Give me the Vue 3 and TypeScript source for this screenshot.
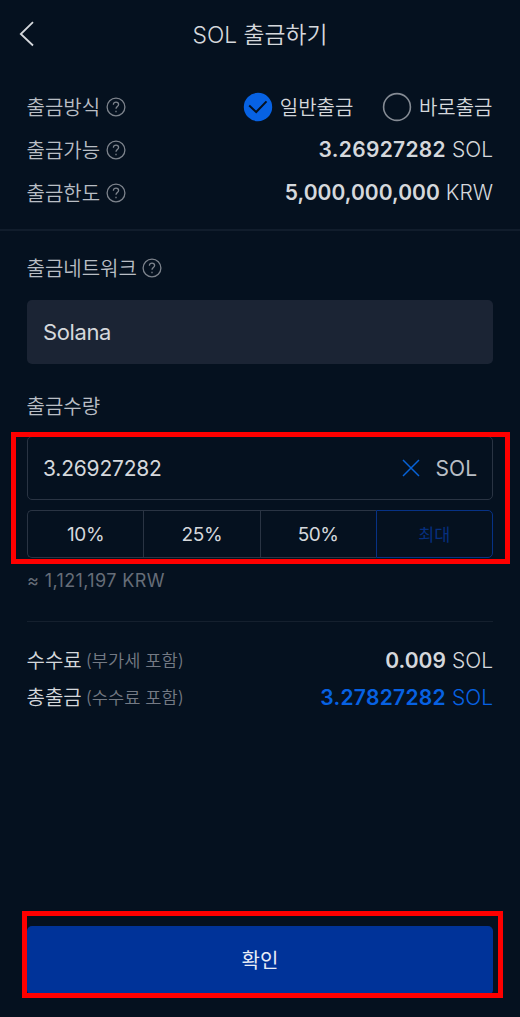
<script setup lang="ts">
interface Row {
  label: string
  value?: string
  unit?: string
}

const rows: Row[] = [
  { label: '출금방식' },
  { label: '출금가능', value: '3.26927282', unit: 'SOL' },
  { label: '출금한도', value: '5,000,000,000', unit: 'KRW' },
]
const methods = [
  { name: '일반출금', selected: true },
  { name: '바로출금', selected: false },
]
const ratios = ['10%', '25%', '50%', '최대']
const totals = [
  { label: '수수료', note: '(부가세 포함)', value: '0.009', accent: false },
  { label: '총출금', note: '(수수료 포함)', value: '3.27827282', accent: true },
]
</script>

<template>
  <main class="screen">
    <header class="header">
      <svg class="back" width="16" height="28" viewBox="0 0 16 28"><path d="M14 2.2 1.8 14 14 25.5" /></svg>
      <h1 class="title">SOL 출금하기</h1>
    </header>

    <section class="info">
      <div v-for="row in rows" :key="row.label" class="row">
        <span class="label">{{ row.label }}</span>
        <svg class="help" width="20" height="20" viewBox="0 0 20 20">
          <circle cx="10" cy="10" r="8.9" />
          <path d="M7.4 7.7c0-1.6 1.1-2.6 2.6-2.6s2.6 1 2.6 2.4c0 2-2.6 2.1-2.6 4.3" />
          <path d="M10 13.7v1.5" />
        </svg>
        <div v-if="row.value" class="amount" :class="{ limit: row.unit === 'KRW' }">
          <b>{{ row.value }}</b><span class="unit">{{ row.unit }}</span>
        </div>
        <div v-else class="methods">
          <div v-for="m in methods" :key="m.name" class="method">
            <svg width="30" height="30" viewBox="0 0 30 30">
              <template v-if="m.selected">
                <circle class="disc" cx="15" cy="15" r="14.2" />
                <path class="tick" d="m6.2 13.6 7 6.4L23.5 9.4" />
              </template>
              <circle v-else class="ring" cx="15" cy="15" r="13.4" />
            </svg>
            <span class="method-name">{{ m.name }}</span>
          </div>
        </div>
      </div>
    </section>

    <section class="form">
      <div class="field-label network">
        <span class="label">출금네트워크</span>
        <svg class="help" width="20" height="20" viewBox="0 0 20 20">
          <circle cx="10" cy="10" r="8.9" />
          <path d="M7.4 7.7c0-1.6 1.1-2.6 2.6-2.6s2.6 1 2.6 2.4c0 2-2.6 2.1-2.6 4.3" />
          <path d="M10 13.7v1.5" />
        </svg>
      </div>
      <div class="select">Solana</div>
      <div class="field-label quantity"><span class="label">출금수량</span></div>
      <div class="entry">
        <div class="input">
          <span class="number">3.26927282</span>
          <svg class="clear" width="18" height="18" viewBox="0 0 18 18"><path d="m1 1 16 16M17 1 1 17" /></svg>
          <span class="input-unit">SOL</span>
        </div>
        <div class="ratios">
          <button v-for="(r, i) in ratios" :key="r" class="ratio" :class="{ max: i === 3 }">{{ r }}</button>
        </div>
        <div class="outline entry-outline"></div>
      </div>
      <div class="approx">≈ 1,121,197 KRW</div>
      <div class="totals">
        <div v-for="t in totals" :key="t.label" class="total">
          <span class="label bright">{{ t.label }}</span>
          <span class="note">{{ t.note }}</span>
          <div class="amount" :class="{ accent: t.accent, fee: !t.accent }">
            <b>{{ t.value }}</b><span class="unit">SOL</span>
          </div>
        </div>
      </div>
    </section>

    <footer class="footer">
      <button class="confirm">확인</button>
      <div class="outline footer-outline"></div>
    </footer>
  </main>
</template>

<style>
body {
  background: #05111f;
}
</style>

<style scoped>
.screen {
  box-sizing: border-box;
  width: 520px;
  height: 1017px;
  display: flex;
  flex-direction: column;
  overflow: hidden;
  background: #05111f;
  color: #d5d8dc;
  font-family: Inter, "Noto Sans CJK KR", sans-serif;
  font-size: 20px;
  line-height: 30px;
  white-space: nowrap;
}
svg {
  display: block;
  flex: none;
  fill: none;
}
button {
  padding: 0;
  margin: 0;
  background: none;
  font: inherit;
  color: inherit;
}
.header {
  height: 85px;
  box-sizing: border-box;
  position: relative;
  padding-top: 20px;
}
.back {
  position: absolute;
  left: 19px;
  top: 20px;
  stroke: #d5d8dc;
  stroke-width: 1.8;
}
.title {
  margin: 0;
  text-align: center;
  font-size: 22.8px;
  font-weight: 360;
  line-height: 30px;
}
.info {
  height: 144px;
  padding: 0 27px;
  border-bottom: 2px solid #111d2c;
}
.row {
  height: 43px;
  display: flex;
  align-items: center;
}
.label {
  padding-top: 2px;
  margin-left: -0.5px;
  color: #b9bec5;
  font-weight: 350;
}
.bright {
  color: #d5d8dc;
}
.help {
  margin-left: 5.5px;
  stroke: #7d838c;
  stroke-width: 1.3;
}
.amount {
  margin-left: auto;
  padding-top: 1px;
  display: flex;
  gap: 6px;
  font-size: 21px;
}
.amount b {
  font-weight: 600;
  letter-spacing: 0.3px;
}
.amount.limit b {
  letter-spacing: 0.03px;
}
.amount.fee b {
  letter-spacing: 0.05px;
}
.unit {
  font-weight: 300;
}
.methods {
  margin-left: auto;
  margin-right: 0.5px;
  display: flex;
  gap: 29px;
}
.method {
  display: flex;
  align-items: center;
  gap: 6.5px;
  font-weight: 350;
}
.method-name {
  padding-top: 2px;
}
.disc {
  fill: #0762e3;
}
.tick {
  stroke: #05111f;
  stroke-width: 2;
}
.ring {
  stroke: #858b94;
  stroke-width: 1.6;
}
.form {
  padding: 0 27px;
}
.field-label {
  height: 30px;
  display: flex;
  align-items: center;
}
.network {
  margin-top: 22px;
}
.select {
  height: 64px;
  margin-top: 17px;
  padding-left: 16px;
  border-radius: 5px;
  background: #1b2434;
  font-size: 22px;
  letter-spacing: -0.4px;
  line-height: 65px;
}
.quantity {
  margin-top: 27px;
}
.entry {
  position: relative;
  margin-top: 15px;
}
.input {
  box-sizing: border-box;
  height: 64px;
  display: flex;
  align-items: center;
  padding: 0 15px;
  border: 1px solid #2a3443;
  border-radius: 5px;
  font-size: 21px;
}
.number {
  padding-top: 1px;
  letter-spacing: -0.2px;
}
.clear {
  margin-left: auto;
  stroke: #0762d8;
  stroke-width: 1.5;
}
.input-unit {
  padding-top: 1px;
  margin-left: 16px;
  color: #b9bec5;
}
.ratios {
  display: flex;
  margin-top: 10px;
}
.ratio {
  box-sizing: border-box;
  flex: 1;
  height: 48px;
  padding-top: 2px;
  border: 1px solid #2a3443;
  border-right: 0;
  font-size: 19px;
  letter-spacing: -0.4px;
}
.ratio:first-child {
  border-radius: 5px 0 0 5px;
}
.max {
  padding-top: 1px;
  border: 1px solid #073285;
  border-radius: 0 5px 5px 0;
  color: #062f7e;
  font-size: 17.5px;
  letter-spacing: 0;
}
.outline {
  position: absolute;
  box-sizing: border-box;
  border: 5px solid #ff0000;
  pointer-events: none;
}
.entry-outline {
  left: -16px;
  right: -17px;
  top: -4px;
  bottom: -6px;
}
.approx {
  margin-top: 8px;
  height: 30px;
  color: #666d78;
  font-size: 18px;
  letter-spacing: 0.4px;
}
.totals {
  margin-top: 25px;
  padding-top: 19px;
  border-top: 1px solid #15202e;
}
.total {
  height: 37px;
  display: flex;
  align-items: center;
}
.total .amount {
  padding-top: 2px;
}
.note {
  margin-left: 4px;
  padding-top: 2px;
  color: #747a84;
  font-size: 17.6px;
  font-weight: 350;
}
.accent {
  color: #0762e3;
}
.footer {
  position: relative;
  margin: auto 27px 22px;
}
.confirm {
  display: block;
  width: 100%;
  height: 69px;
  border: 0;
  border-radius: 5px;
  background: #003399;
  color: #e8edf6;
  font-size: 20px;
}
.footer-outline {
  left: -5px;
  right: -10px;
  top: -15px;
  bottom: -3px;
}
</style>
